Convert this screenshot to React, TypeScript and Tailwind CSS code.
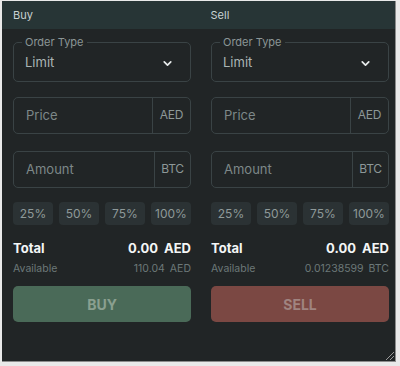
import { ChevronDown } from "lucide-react";

type Side = {
  title: string;
  unit: string;
  available: string;
  availUnit: string;
  action: string;
  btn: string;
  btnText: string;
};

const sides: Side[] = [
  { title: "Buy", unit: "AED", available: "110.04", availUnit: "AED", action: "BUY", btn: "bg-[#4a6a58]", btnText: "text-[#8aa090]" },
  { title: "Sell", unit: "BTC", available: "0.01238599", availUnit: "BTC", action: "SELL", btn: "bg-[#7b4843]", btnText: "text-[#a08480]" },
];

function InputBox({ placeholder, unit, unitWidth }: { placeholder: string; unit: string; unitWidth: string }) {
  return (
    <div className="flex h-[37px] rounded-[5px] border border-[#3a4345]">
      <div className="flex flex-1 items-center pl-[12px] text-[13px] text-[#7d8888]">{placeholder}</div>
      <div className={`border-l border-[#3a4345] pt-[8px] text-center text-[12px] tracking-[-0.3px] text-[#8d9898] ${unitWidth}`}>{unit}</div>
    </div>
  );
}

function Column({ s }: { s: Side }) {
  return (
    <div className="flex flex-col">
      <div className="relative mt-[13px] flex h-[40px] items-center justify-between rounded-[5px] border border-[#3a4345] pl-[11px] pr-[16px]">
        <span className="absolute -top-[7px] left-[8px] bg-[#212526] px-[3px] text-[11px] leading-[13px] text-[#8b9696]">
          Order Type
        </span>
        <span className="pt-[2px] text-[13px] text-[#aab5b5]">Limit</span>
        <ChevronDown className="mt-[2px] h-[13px] w-[13px] text-[#e6eaea]" strokeWidth={3.2} />
      </div>
      <div className="mt-[15px]">
        <InputBox placeholder="Price" unit="AED" unitWidth="w-[38px]" />
      </div>
      <div className="mt-[17px]">
        <InputBox placeholder="Amount" unit="BTC" unitWidth="w-[36px]" />
      </div>
      <div className="mt-[14px] grid grid-cols-4 gap-[6px]">
        {["25%", "50%", "75%", "100%"].map((p) => (
          <div key={p} className="flex h-[23px] items-center justify-center rounded-[4px] bg-[#2b3234] text-[12px] text-[#8e9999]">
            {p}
          </div>
        ))}
      </div>
      <div className="mt-[14px] flex items-center justify-between text-[13px] font-bold text-[#f4f6f6]">
        <span>Total</span>
        <span>
          0.00<span className="ml-[6px]">AED</span>
        </span>
      </div>
      <div className="mt-[2px] flex items-center justify-between text-[10.5px] text-[#6c7878]">
        <span>Available</span>
        <span>
          {s.available}
          <span className="ml-[5px]">{s.availUnit}</span>
        </span>
      </div>
      <div className={`mt-[10px] flex h-[36px] items-center justify-center rounded-[5px] text-[14px] font-bold ${s.btn} ${s.btnText}`}>
        {s.action}
      </div>
    </div>
  );
}

export default function App() {
  return (
    <div className="h-[366px] w-[400px] bg-[#e9e9e9] pb-[4px] pl-[2px] pr-[4px] pt-[1px]" style={{ fontFamily: "Inter, 'Noto Sans', sans-serif" }}>
      <div className="relative h-[361px] w-[394px] border-b border-r border-[#8c8c8c] bg-[#212526]">
        <div className="grid h-[28px] grid-cols-2 bg-[#273536] text-[11px] text-[#c9d2d2]">
          <div className="flex items-center pl-[11px]">Buy</div>
          <div className="flex items-center pl-[12px]">Sell</div>
        </div>
        <div className="grid grid-cols-[178px_178px] gap-[20px] pl-[11px]">
          {sides.map((s) => (
            <Column key={s.title} s={s} />
          ))}
        </div>
        <svg className="absolute bottom-0 right-0" width="12" height="12" viewBox="0 0 12 12">
          <path d="M11 3 L3 11 M11 7 L7 11" stroke="#9a9a9a" strokeWidth="1" />
        </svg>
      </div>
    </div>
  );
}
